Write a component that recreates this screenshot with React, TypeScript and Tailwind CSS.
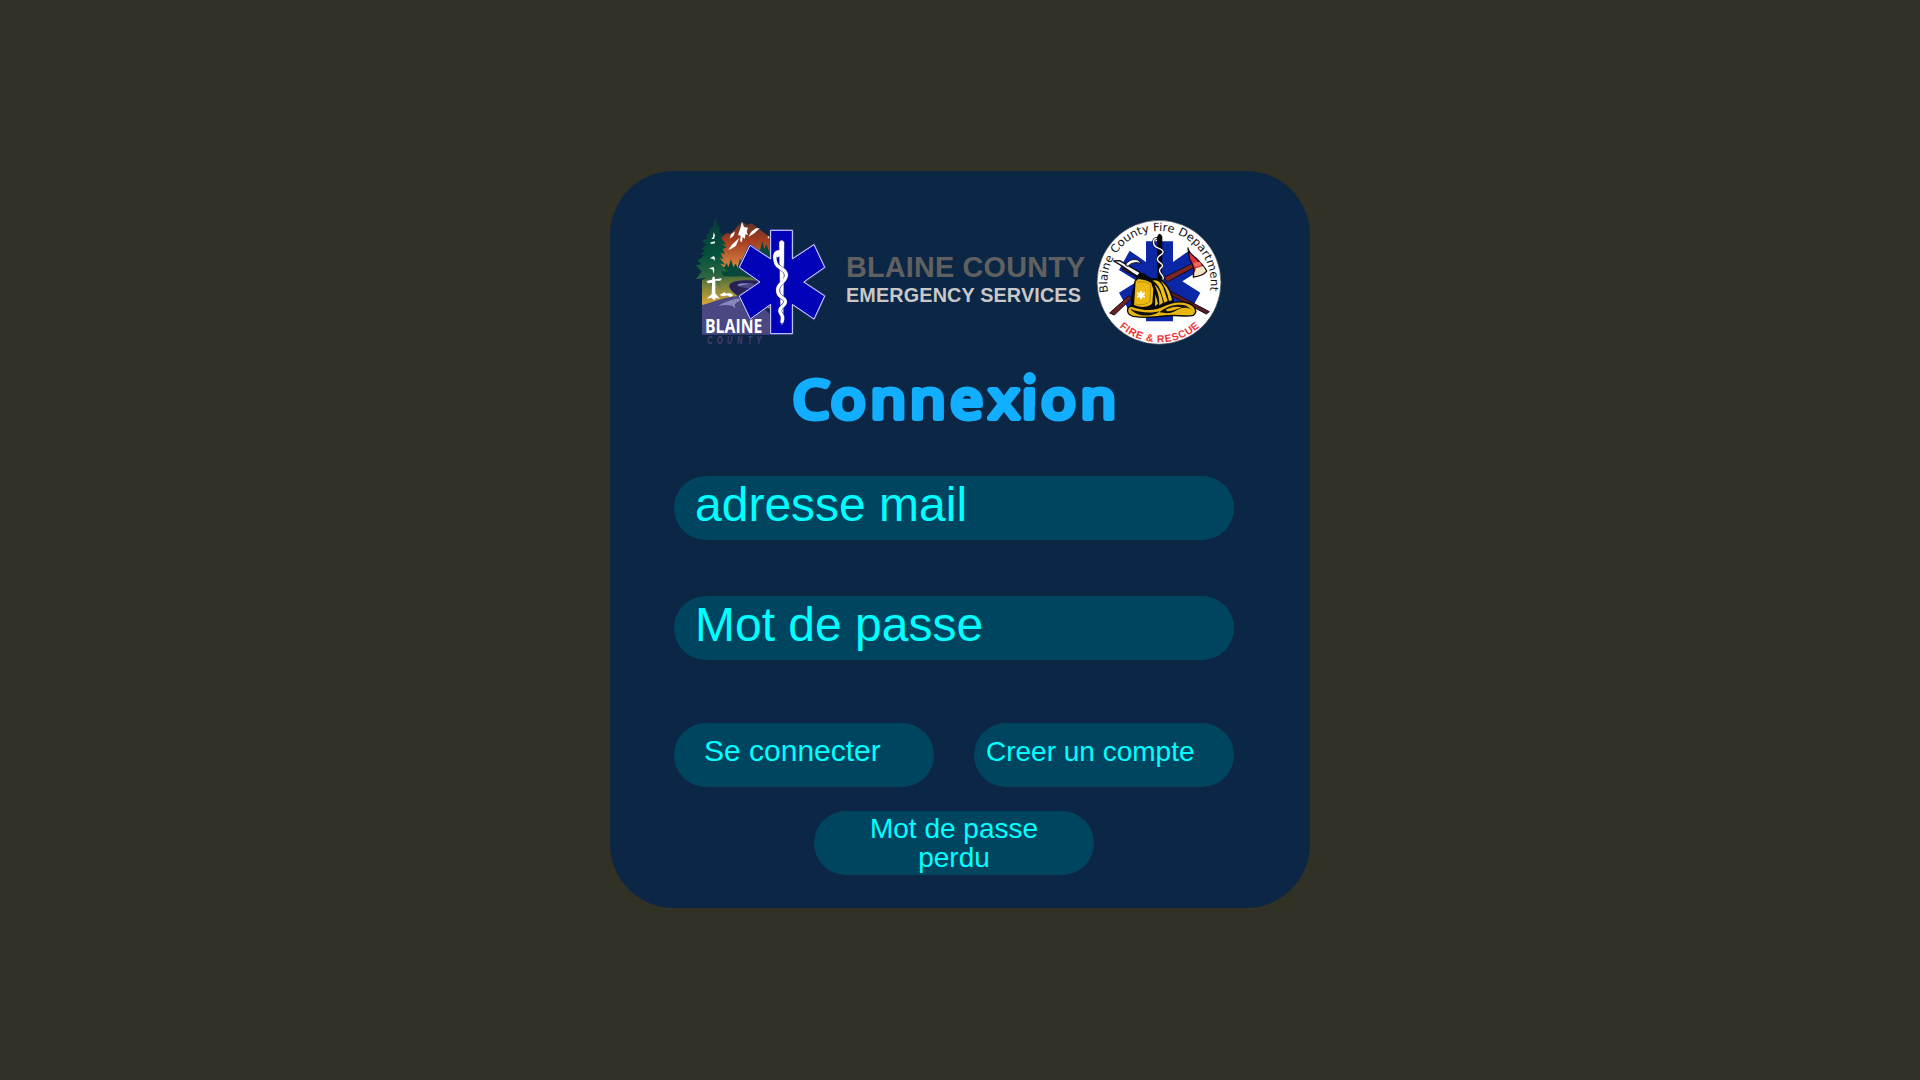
import React from "react";

const STAR =
  "M272 76H337V162L402 119L434 187L371 231L434 273L402 342L337 298V386H272V298L211 342L178 273L240 231L178 187L210 121L272 162Z";

function BlaineLogo() {
  return (
    <svg viewBox="0 0 480 450" className="h-[150px] w-[160px] shrink-0" aria-label="Blaine County">
      <defs>
        <linearGradient id="sky" x1="0" y1="50" x2="0" y2="300" gradientUnits="userSpaceOnUse">
          <stop offset="0" stopColor="#5c3428" />
          <stop offset="0.22" stopColor="#a33c1f" />
          <stop offset="0.5" stopColor="#cf7a3c" />
          <stop offset="0.62" stopColor="#b98a3c" />
          <stop offset="1" stopColor="#d9a93a" />
        </linearGradient>
        <linearGradient id="meadow" x1="0" y1="195" x2="0" y2="305" gradientUnits="userSpaceOnUse">
          <stop offset="0" stopColor="#2d5a38" />
          <stop offset="0.4" stopColor="#75803a" />
          <stop offset="1" stopColor="#e0ac38" />
        </linearGradient>
        <linearGradient id="pine" x1="0" y1="38" x2="0" y2="260" gradientUnits="userSpaceOnUse">
          <stop offset="0" stopColor="#0b3b39" />
          <stop offset="0.5" stopColor="#03523c" />
          <stop offset="0.8" stopColor="#2c6640" />
          <stop offset="1" stopColor="#8a8a3e" />
        </linearGradient>
      </defs>
      <path d="M112 115L128 93L140 84L152 86L186 50L200 60L215 55L272 98V220H112Z" fill="url(#sky)" />
      <path d="M186 50L192 66L204 68L200 80L204 90L196 88L195 102L188 96L186 112L180 108L182 92L174 90L181 70Z" fill="#fff" />
      <path d="M205 96L214 80L228 70H239L224 84ZM165 79L161 92L149 101L153 88ZM178 98L168 122L153 132L145 134L156 119Z" fill="#fff" />
      <path d="M262 96L268 93V102Z" fill="#fff" />
      <path d="M120 190L134 186L140 174L145 187L153 163L160 186L167 176L173 188L180 160L187 184L203 172L215 190L235 150L242 128L247 108L253 132L259 118L272 150V235H115Z" fill="#07483a" />
      <path d="M66 225C100 205 150 218 180 214L272 222V310H66Z" fill="url(#meadow)" />
      <path d="M66 300C100 292 132 276 176 273C158 263 143 247 150 237C165 225 200 224 238 228L242 300L272 330V389H66Z" fill="#4b4783" />
      <path d="M150 237C165 225 200 224 238 228L232 240C203 232 178 233 171 239C174 246 195 248 215 252L178 276C158 263 143 247 150 237Z" fill="#272254" />
      <path d="M172 240C181 234 202 235 221 237C203 237 187 239 178 243Z" fill="#8e8cc5" />
      <path d="M114 303C135 290 160 282 182 279L184 287C166 290 157 301 172 313L156 302C140 298 129 301 114 303Z" fill="#8886bd" />
      <path d="M106 37L111 58L121 70L116 75L130 94L122 97L139 119L124 117L140 127L128 132L135 147L122 143L130 163L118 158L136 179L121 176L144 200L123 199L136 224L120 219L122 251L106 234L94 260L88 231L76 235L79 218L48 222L65 200L47 180L65 178L53 167L73 150L61 148L76 137L65 132L79 119L66 108L84 99L77 92L91 82L87 75L99 65Z" fill="url(#pine)" />
      <path d="M101 82L105 91L102 102L94 101L99 96ZM90 113L104 109L105 115L94 117ZM101 153L105 158L103 168L100 162L90 160ZM101 186L103 194L101 208L98 194L87 190Z" fill="#fff" />
      <path d="M98 215H104L105 223L126 220L121 227H106V265L119 281L108 279L102 286L94 278L80 281L95 268L96 233L84 235L79 228L96 224Z" fill="#fff" />
      <path d="M119 270L133 261L143 271L128 274ZM135 266L151 264L160 271L150 276Z" fill="#fff" />
      <text x="75" y="384" textLength="172" lengthAdjust="spacingAndGlyphs" fill="#fff" fontFamily="Open Sans, Noto Sans, sans-serif" fontWeight="700" fontSize="58">BLAINE</text>
      <text transform="translate(0 417) scale(0.7 1)" x="117 159 201 245 290 328" fill="#443f76" fontFamily="Liberation Sans, sans-serif" fontStyle="italic" fontWeight="700" fontSize="31">
        {"COUNTY"}
      </text>
      <path d={STAR} fill="#0707b8" stroke="#413f9d" strokeWidth="7" />
      <path d={STAR} fill="#0202b8" stroke="#d9dcff" strokeWidth="3" />
      <path d="M297 112Q305 98 313 112L311 340Q305 382 301 340Z" fill="#fff" stroke="#27278f" strokeWidth="2" />
      <g fill="none" strokeLinecap="round" strokeLinejoin="round">
        <path d="M302 141C281 138 282 158 288 176C294 191 324 193 318 216C312 235 288 238 294 263C298 281 322 277 315 295C310 306 297 306 300 320C302 330 313 330 306 350" stroke="#25258f" strokeWidth="13" />
        <path d="M302 141C281 138 282 158 288 176C294 191 324 193 318 216C312 235 288 238 294 263C298 281 322 277 315 295C310 306 297 306 300 320C302 330 313 330 306 350" stroke="#fff" strokeWidth="10" />
      </g>
      <path d="M286 140Q300 130 308 142L302 152L290 158Z" fill="#fff" />
      <path d="M299 110H311V178H299ZM301 206H310V238H301Z" fill="#fff" />
    </svg>
  );
}

function FireBadge() {
  return (
    <svg viewBox="0 0 450 435" className="h-[145px] w-[150px] shrink-0" aria-label="Blaine County Fire Department">
      <defs>
        <path id="arcTop" d="M69.7 247A155 155 0 1 1 374.3 247" />
        <path id="arcBottom" d="M103 351A179 179 0 0 0 345 349" />
      </defs>
      <circle cx="222" cy="217" r="186" fill="#fff" stroke="#353947" strokeWidth="2" />
      <path d="M183 94H264V156L312 122L346 180L292 214L346 248L314 306L264 272V334H183V272L134 306L102 248L157 214L102 180L134 122L183 156Z" fill="#0c27a6" />
      <g strokeLinejoin="round">
        <path d="M364 312L373 305L120 171L112 178Z" fill="#5d1c20" stroke="#160b10" strokeWidth="3" />
        <path d="M74 309L88 315L140 265L132 257Z" fill="#6c2124" stroke="#160b10" strokeWidth="3" />
        <path d="M238 202L328 157L333 169L246 216Z" fill="#812426" stroke="#160b10" strokeWidth="3" />
        <path d="M309 114C312 130 326 139 336 147C347 160 358 170 365 183C356 195 340 199 325 201L327 177L320 158L314 148Z" fill="#dc3436" stroke="#160b10" strokeWidth="4" />
        <path d="M333 175L354 168L363 183C354 193 340 197 327 199L328 190Z" fill="#f3e6c5" />
        <path d="M325 159L345 155L350 165L330 171Z" fill="#f06962" />
        <path d="M86 153L104 152L166 188L158 199L143 190L108 166Z" fill="#fafafa" stroke="#0d0d18" strokeWidth="4" />
        <path d="M122 166C127 151 145 146 158 150L171 161C153 155 138 158 129 169Z" fill="#fff" stroke="#0d0d18" strokeWidth="3" />
      </g>
      <path d="M216 80Q224 62 232 80L231 207H218Z" fill="#05050a" />
      <path d="M214 85C202 88 203 106 215 112C239 121 239 128 225 136C213 146 215 152 229 161C241 172 220 172 224 184C226 194 238 198 234 207" fill="none" stroke="#10101b" strokeWidth="8" strokeLinecap="round" />
      <path d="M214 85C202 88 203 106 215 112C239 121 239 128 225 136C213 146 215 152 229 161C241 172 220 172 224 184C226 194 238 198 234 207" fill="none" stroke="#fff" strokeWidth="4" strokeLinecap="round" />
      <g stroke="#08080b" strokeWidth="4" strokeLinejoin="round">
        <path d="M155 207C160 188 175 186 186 200L203 207C231 201 255 228 266 276L257 300L200 316L139 290C140 250 146 225 155 207Z" fill="#0a0a0b" />
        <path d="M139 288C123 292 123 314 145 319C177 325 208 322 239 318C274 313 302 322 325 316C339 305 331 286 308 279C281 271 252 279 230 290C203 304 171 299 139 288Z" fill="#e9b60f" />
        <path d="M150 214L158 205C169 206 187 209 200 217L207 237L204 280C194 294 164 297 145 286Z" fill="#ecbb13" />
      </g>
      <path d="M202 212C215 207 226 214 234 230L248 273L238 278L226 240C220 224 211 216 202 212ZM208 223C222 235 230 257 234 278L223 286C224 261 217 241 208 223ZM228 213C245 225 257 248 261 271L252 273C248 249 239 229 228 213ZM211 253L219 281L210 289Z" fill="#edc01c" />
      <path d="M136 296C160 308 203 311 224 303C207 322 154 322 136 296Z" fill="#111" />
      <path d="M223 307C247 286 280 280 304 287L320 299C299 287 282 297 265 306C249 312 237 309 223 307Z" fill="#111" />
      <path d="M242 299C259 291 273 288 291 292C276 297 263 305 247 304Z" fill="#e9b60f" />
      <path d="M156 217C170 213 188 216 197 226L195 274C181 286 162 286 151 281" fill="none" stroke="#9d7607" strokeWidth="2" />
      <path d="M168 245V265M159 250L177 260M177 250L159 260" stroke="#fff" strokeWidth="6" strokeLinecap="round" />
      <text fill="#161616" fontFamily="DejaVu Sans, sans-serif" fontSize="34">
        <textPath href="#arcTop" textLength="540" lengthAdjust="spacingAndGlyphs">Blaine County Fire Department</textPath>
      </text>
      <text fill="#f03438" fontFamily="Liberation Sans, sans-serif" fontWeight="700" fontSize="31">
        <textPath href="#arcBottom" textLength="264">FIRE &amp; RESCUE</textPath>
      </text>
    </svg>
  );
}

function Title() {
  return (
    <h1 className="mt-[5px] ml-[170px] h-[80px] w-[350px]">
      <svg viewBox="0 0 350 80" className="h-full w-full overflow-visible">
        <text
          transform="scale(1.08 .975)"
          x="12.1 47.3 84 120.7 157.8 193.6 224 241.8 278.4"
          y="59.8"
          fill="#12aeff"
          stroke="#12aeff"
          strokeWidth="6"
          strokeLinejoin="round"
          fontFamily="Open Sans, Noto Sans, sans-serif"
          fontWeight="400"
          fontSize="53"
        >
          Connexion
        </text>
        <rect x="242" y="9" width="15" height="20" fill="#0c2745" />
        <rect x="244.3" y="27" width="10.8" height="20" rx="2.5" fill="#12aeff" />
        <circle cx="249.7" cy="18.3" r="6.2" fill="#12aeff" />
      </svg>
    </h1>
  );
}

export default function App() {
  return (
    <main className="flex h-screen w-screen items-center justify-center overflow-hidden bg-[#323125] font-['Liberation_Sans',Arial,sans-serif]">
      <section className="mb-px flex h-[737px] w-[700px] flex-col rounded-[64px] bg-[#0c2745]">
        <header className="mt-[34px] flex h-[150px] items-start pl-[70px]">
          <BlaineLogo />
          <div className="mt-[46px] ml-[6px] w-[239px] shrink-0 font-bold whitespace-nowrap">
            <p className="text-[28.8px] leading-[32px] tracking-[0.2px] text-[#606060]">BLAINE COUNTY</p>
            <p className="mt-[1px] text-[19.8px] leading-[22px] tracking-[0.15px] text-[#c8c8c8]">EMERGENCY SERVICES</p>
          </div>
          <div className="mt-[5px]">
            <FireBadge />
          </div>
        </header>
        <Title />
        <form className="mt-[36px] flex flex-col px-[64px] text-[#00ffff]" onSubmit={(e) => e.preventDefault()}>
          <div className="mr-3 flex flex-col gap-14">
            <label className="h-16 rounded-full bg-[#004560] pl-[21px] text-5xl leading-[58px]">adresse mail</label>
            <label className="h-16 rounded-full bg-[#004560] pl-[21px] text-5xl leading-[58px]">Mot de passe</label>
          </div>
          <div className="mt-[63px] mr-3 flex justify-between">
            <button className="h-16 w-[260px] rounded-full bg-[#004560] pb-2 pl-[30px] text-left text-[30px] leading-[56px]">Se connecter</button>
            <button className="h-16 w-[260px] rounded-full bg-[#004560] pb-[7px] pl-[12px] text-left text-[28px] leading-[57px]">Creer un compte</button>
          </div>
          <button className="mt-6 ml-[140px] h-16 w-[280px] rounded-full bg-[#004560] px-12 pt-0 text-center text-[28px] leading-[29px]">
            Mot de passe perdu
          </button>
        </form>
      </section>
    </main>
  );
}
